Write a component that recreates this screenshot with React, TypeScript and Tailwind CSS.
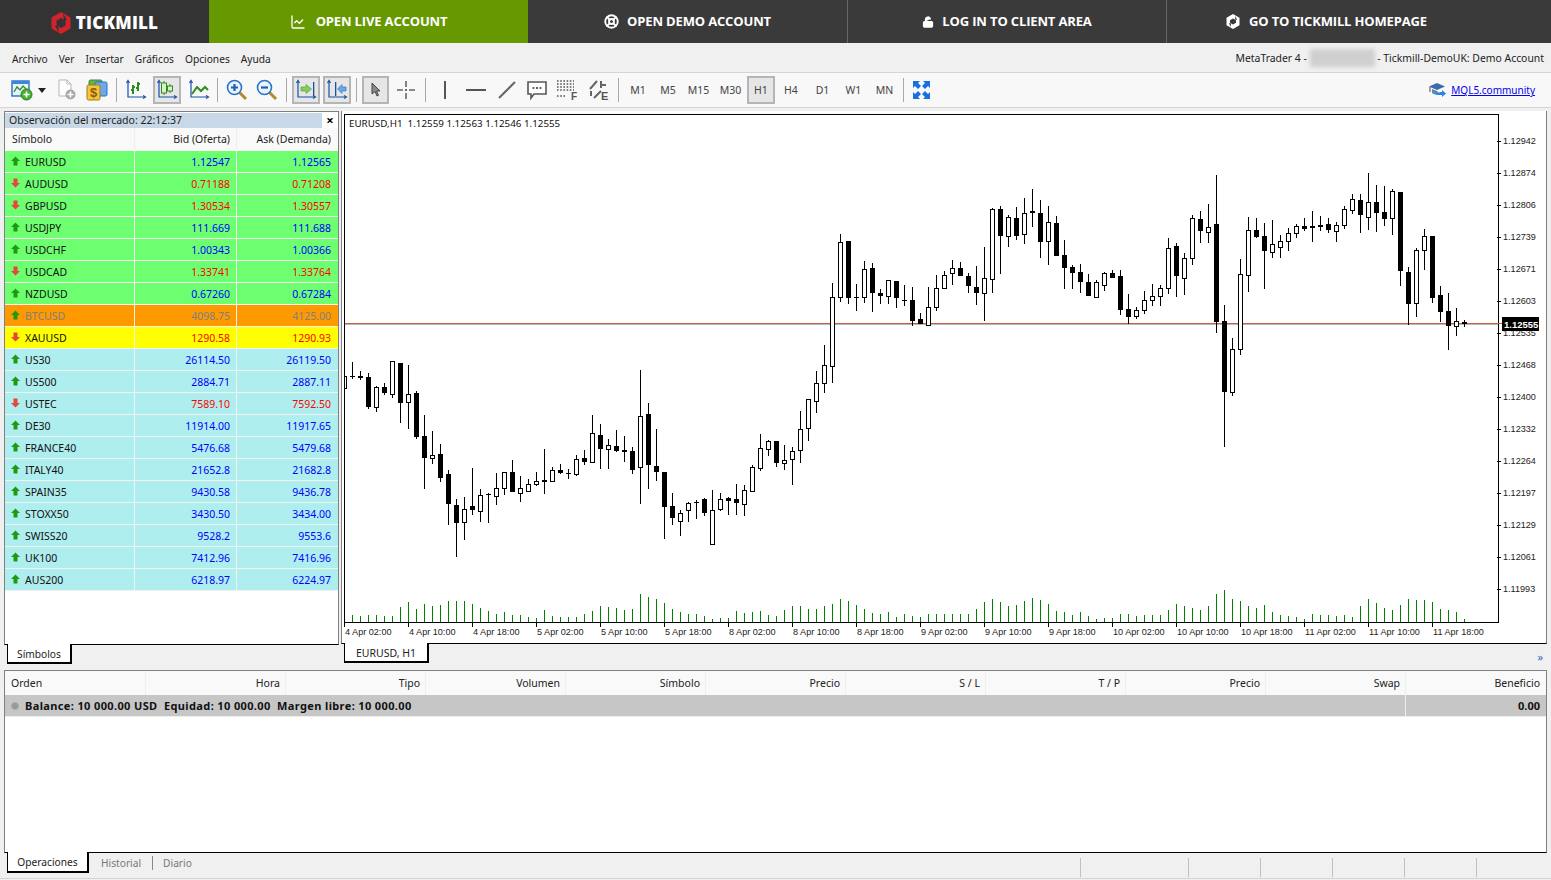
import React from "react";
import { LifeBuoy, LineChart, LockOpen } from "lucide-react";

type C = [number, number, number, number, number];
// [wickTop, bodyTop, bodyBottom, wickBottom, black] in 3x crop coordinates
const segA: C[] = [
  [78,78,115,115,0],[37,78,80,87,1],[63,78,84,90,1],[70,81,170,176,1],[108,112,170,186,0],[98,112,130,135,1],[33,33,131,143,0],[40,40,158,218,1],[45,133,157,236,0],[124,130,260,268,1],
  [195,259,323,417,1],[243,316,323,341,0],[282,313,383,396,1],[360,373,461,524,1],[447,466,518,620,1],[441,478,515,570,0],[354,468,480,495,1],[417,436,482,516,0],[428,431,436,519,1],[369,415,437,465,0],
  [366,367,413,435,0],[330,367,425,425,1],[378,415,430,456,0],[388,403,422,422,0],[366,394,401,408,0],[297,390,395,432,1],[351,361,392,392,0],[342,361,368,372,1],[357,369,371,387,1],[315,328,371,377,0],
  [300,325,335,344,1],[195,250,335,338,0],[222,256,296,357,1],[267,286,296,357,0],[240,289,302,305,1],[258,300,307,336,1],[292,304,359,372,1],[60,199,352,462,0],[159,193,344,417,1],[237,349,365,393,1],
  [366,367,470,567,1],[429,469,503,524,1],[480,490,512,558,0],[456,460,481,516,0],[450,455,460,507,1],[445,448,488,498,1],[420,479,583,584,0],[430,446,476,483,0],[440,445,452,495,1],[402,448,458,495,1],
];
const segB: C[] = [
  [975,991,1031,1068,0],[915,922,992,995,0],[822,865,923,933,0],[840,844,866,888,0],[844,844,908,920,1],[855,901,908,930,0],[862,874,896,975,0],[753,808,869,908,0],[718,718,803,843,0],[633,670,722,758,0],
  [555,616,668,698,0],[369,412,617,668,0],[222,247,412,426,0],[243,243,414,432,1],[372,411,413,453,1],[303,328,412,429,0],[309,324,398,456,1],[387,399,408,432,1],[360,361,407,432,0],[363,363,414,444,1],
  [375,421,423,438,1],[381,420,483,498,1],[459,477,492,492,1],[381,442,494,494,0],[345,385,440,453,0],[333,346,383,387,0],[300,325,338,375,0],[306,324,348,348,1],[339,348,378,399,1],[318,381,399,435,1],
  [261,355,398,483,0],[145,148,356,399,0],[138,147,228,342,1],[165,172,227,261,0],[141,174,228,240,1],[114,160,221,252,0],[87,153,159,201,1],[120,159,246,294,1],[138,187,242,315,0],[168,189,288,288,1],
  [240,285,324,387,1],[315,321,339,387,1],[312,336,366,399,1],[342,366,408,408,1],[360,367,410,411,0],[336,340,374,393,0],[330,339,354,354,1],[330,348,450,465,1],[402,447,471,492,1],[441,451,467,477,0],
  [393,421,449,462,0],[372,409,419,438,0],[375,385,409,438,0],[234,265,385,402,0],[249,258,348,411,1],[279,295,353,405,0],[165,175,293,315,0],[153,177,213,249,1],[132,202,215,249,0],[45,192,486,519,1],
  [435,483,696,861,1],[534,568,695,708,0],[297,343,566,585,0],[171,211,344,396,0],[174,210,231,234,1],[189,228,273,387,1],[180,253,275,294,0],[225,244,260,294,0],[204,220,242,273,0],[192,199,218,234,0],
  [174,199,207,213,1],[153,198,204,246,1],[168,195,201,213,1],[174,192,210,219,1],[186,196,212,246,0],[138,148,194,207,0],[102,118,149,162,0],[102,120,165,219,1],[39,127,170,210,0],[75,126,159,216,1],
  [78,156,177,198,1],[87,94,173,225,0],[96,96,333,378,1],[321,336,432,495,1],[264,270,428,471,0],[207,229,269,330,0],[228,228,414,429,1],[378,405,456,486,1],[399,453,498,570,1],[444,484,497,528,0],
  [480,487,491,502,1],
];
const volA = [795,798,795,796,798,798,771,755,776,763,768,765,753,754,754,763,774,784,791,786,794,796,801,803,780,799,800,801,800,792,782,768,771,774,780,777,732,742,747,759,777,786,792,792,798,807,805,804,784];
const volB = [160,157,154,165,167,150,138,137,146,148,137,131,116,124,135,148,158,163,157,171,162,168,172,161,161,162,163,163,161,147,127,116,126,137,134,124,115,120,131,153,155,164,156,167,176,174,175,162,163,167,165,165,165,150,132,139,144,150,137,101,90,118,123,138,145,135,156,165,168,171,176,162,165,165,168,166,170,138,118,130,144,150,134,117,119,120,127,148,149,156,178];

const prices = ["1.12942","1.12874","1.12806","1.12739","1.12671","1.12603","1.12535","1.12468","1.12400","1.12332","1.12264","1.12197","1.12129","1.12061","1.11993"];
const times = ["4 Apr 02:00","4 Apr 10:00","4 Apr 18:00","5 Apr 02:00","5 Apr 10:00","5 Apr 18:00","8 Apr 02:00","8 Apr 10:00","8 Apr 18:00","9 Apr 02:00","9 Apr 10:00","9 Apr 18:00","10 Apr 02:00","10 Apr 10:00","10 Apr 18:00","11 Apr 02:00","11 Apr 10:00","11 Apr 18:00"];

function Candle({ c, i, base }: { c: C; i: number; base: number }) {
  const x = 352 + 8 * i;
  const y = (v: number) => Math.round(base + v / 3);
  const [wt, bt, bb, wb, black] = c;
  const top = y(bt);
  const h = Math.max(y(bb) - top, 1);
  return (
    <g>
      <rect x={x} y={y(wt)} width={1} height={Math.max(y(wb) - y(wt), 1)} fill="#000" />
      <rect x={x - 2} y={top} width={5} height={h + (black ? 0 : 1)} fill="#000" />
      {!black && h >= 2 && <rect x={x - 1} y={top + 1} width={3} height={h - 1} fill="#fff" />}
    </g>
  );
}

function Chart() {
  return (
    <svg viewBox="342 111 1204 532" width={1204} height={532} shapeRendering="crispEdges" className="block">
      <defs>
        <clipPath id="plot"><rect x={345} y={115} width={1153} height={507} /></clipPath>
      </defs>
      <rect x={341} y={111} width={1206} height={532} fill="#fff" />
      <g clipPath="url(#plot)">
        {volA.map((v, k) => <rect key={k} x={352 + 8 * k} y={Math.round(350 + v / 3)} width={1} height={622 - Math.round(350 + v / 3)} fill="#008000" />)}
        {volB.map((v, k) => <rect key={k} x={352 + 8 * (k + 49)} y={Math.round(560 + v / 3)} width={1} height={622 - Math.round(560 + v / 3)} fill="#008000" />)}
        <rect x={345} y={323} width={1153} height={1} fill="#c9603f" />
        <rect x={345} y={324} width={1153} height={1} fill="#b8b8b8" />
        {segA.map((c, k) => <Candle key={k} c={c} i={k - 1} base={350} />)}
        {segB.map((c, k) => <Candle key={k} c={c} i={k + 49} base={160} />)}
      </g>
      <rect x={344} y={114} width={1155} height={1} fill="#000" />
      <rect x={344} y={114} width={1} height={509} fill="#000" />
      <rect x={1498} y={114} width={1} height={509} fill="#000" />
      <rect x={344} y={622} width={1155} height={1} fill="#000" />
      {times.map((t, k) => (
        <g key={t}>
          <rect x={344 + 64 * k} y={622} width={1} height={5} fill="#000" />
          <text x={345 + 64 * k} y={635} fontSize={9.1} fill="#222" fontFamily="'Liberation Sans', sans-serif" shapeRendering="auto">{t}</text>
        </g>
      ))}
      {prices.map((p, k) => (
        <g key={p}>
          <rect x={1497} y={141 + 32 * k} width={4} height={1} fill="#000" />
          <text x={1503} y={144 + 32 * k} fontSize={9.1} fill="#222" fontFamily="'Liberation Sans', sans-serif" shapeRendering="auto">{p}</text>
        </g>
      ))}
      <rect x={1498} y={323} width={4} height={1} fill="#c9603f" />
      <rect x={1502} y={317} width={37} height={14} fill="#000" />
      <text x={1504} y={328} fontSize={9.5} fontWeight={700} fill="#fff" fontFamily="'Liberation Sans', sans-serif" shapeRendering="auto">1.12555</text>
      <text x={349} y={127} fontSize={9.8} fill="#111" fontFamily="'Noto Sans', sans-serif" shapeRendering="auto" xmlSpace="preserve">EURUSD,H1  1.12559 1.12563 1.12546 1.12555</text>
    </svg>
  );
}

const A = ({ up }: { up: boolean }) => (
  <svg width="9" height="10" viewBox="0 0 9 10" className="shrink-0 -mt-[3px]">
    {up ? <path d="M4.5 0.5 L9 5 H6.5 V9.5 H2.5 V5 H0 Z" fill="#1d9a0f" /> : <path d="M4.5 9.5 L9 5 H6.5 V0.5 H2.5 V5 H0 Z" fill="#e8453c" />}
  </svg>
);

type Row = [string, string, string, boolean, string];
const rows: Row[] = [
  ["EURUSD","1.12547","1.12565",true,"g"],["AUDUSD","0.71188","0.71208",false,"g"],["GBPUSD","1.30534","1.30557",false,"g"],["USDJPY","111.669","111.688",true,"g"],["USDCHF","1.00343","1.00366",true,"g"],["USDCAD","1.33741","1.33764",false,"g"],["NZDUSD","0.67260","0.67284",true,"g"],
  ["BTCUSD","4098.75","4125.00",true,"o"],["XAUUSD","1290.58","1290.93",false,"y"],
  ["US30","26114.50","26119.50",true,"c"],["US500","2884.71","2887.11",true,"c"],["USTEC","7589.10","7592.50",false,"c"],["DE30","11914.00","11917.65",true,"c"],["FRANCE40","5476.68","5479.68",true,"c"],["ITALY40","21652.8","21682.8",true,"c"],["SPAIN35","9430.58","9436.78",true,"c"],["STOXX50","3430.50","3434.00",true,"c"],["SWISS20","9528.2","9553.6",true,"c"],["UK100","7412.96","7416.96",true,"c"],["AUS200","6218.97","6224.97",true,"c"],
];
const bgOf: Record<string, string> = { g: "bg-[#6dff70]", o: "bg-[#ff9900]", y: "bg-[#ffff00]", c: "bg-[#afeeee]" };

function WatchRow({ r }: { r: Row }) {
  const [s, b, a, up, k] = r;
  const priceCol = k === "o" ? "text-[#808080]" : up ? "text-[#0000ff]" : "text-[#ff0000]";
  const symCol = k === "o" ? "text-[#808080]" : "text-[#111]";
  return (
    <div className="flex h-[22px] shrink-0 border-b border-[#f2f2f2]">
      <div className={`${bgOf[k]} w-[130px] flex items-center gap-[5px] pl-[6px] pt-[2px] border-r border-[#f2f2f2] ${symCol}`}><A up={up} /><span>{s}</span></div>
      <div className={`${bgOf[k]} w-[102px] flex items-center justify-end pr-[6px] pt-[2px] border-r border-[#f2f2f2] ${priceCol}`}>{b}</div>
      <div className={`${bgOf[k]} w-[101px] flex items-center justify-end pr-[7px] pt-[2px] ${priceCol}`}>{a}</div>
    </div>
  );
}

const Sep = ({ w = "w-[9px]" }: { w?: string }) => (
  <div className={`${w} shrink-0 flex justify-center`}><div className="w-px h-[24px] bg-[#a9a9a9]" /></div>
);

function Btn({ w, active, children }: { w: string; active?: boolean; children?: React.ReactNode }) {
  return (
    <div className={`${w} h-[28px] shrink-0 flex items-center justify-center ${active ? "bg-[#e6e6e6] border-2 border-[#b5b5b5]" : ""}`}>{children}</div>
  );
}

const BL = "#1a4fa8";
const Axes = () => (
  <g fill="none" stroke={BL} strokeWidth="1.2">
    <path d="M3 2V18H20" />
    <path d="M1.5 4L3 1.5 4.5 4M18 16.5 20.5 18 18 19.5" />
  </g>
);
const I = ({ children, w = 22, h = 22 }: { children: React.ReactNode; w?: number; h?: number }) => (
  <svg width={w} height={h} viewBox={`0 0 ${w} ${h}`}>{children}</svg>
);

const IconNew = () => (
  <I w={22} h={22}>
    <rect x="1" y="2" width="17" height="15" fill="#e8f2fb" stroke="#2a6fc0" strokeWidth="1.4" />
    <rect x="1" y="2" width="17" height="3" fill="#3b86d8" />
    <path d="M3 13L6 8 9 11 12 7 16 11" fill="none" stroke="#3a8f2a" strokeWidth="1.4" />
    <circle cx="15.5" cy="15.5" r="5.5" fill="#45b034" stroke="#2d7f22" />
    <path d="M15.5 12.5v6M12.5 15.5h6" stroke="#fff" strokeWidth="1.6" />
  </I>
);
const IconDoc = () => (
  <I>
    <path d="M3 1H11L15 5V17H3Z" fill="#fff" stroke="#b5b5b5" />
    <path d="M11 1V5H15" fill="none" stroke="#b5b5b5" />
    <circle cx="14.5" cy="15.5" r="5" fill="#a8a8a8" />
    <path d="M14.5 12.5v6M11.5 15.5h6" stroke="#fff" strokeWidth="1.6" />
  </I>
);
const IconDollar = () => (
  <I>
    <rect x="3" y="1" width="13" height="9" rx="1.5" fill="#5fb24c" stroke="#3a8a2e" />
    <rect x="9" y="3" width="12" height="14" rx="1.5" fill="#6ea8e6" stroke="#2a6fc0" />
    <rect x="1" y="6" width="13" height="15" rx="1.5" fill="#f3c63d" stroke="#a87a12" />
    <text x="7.5" y="18" textAnchor="middle" fontSize="13" fontWeight="700" fill="#8a5a08" fontFamily="'Liberation Sans', sans-serif">$</text>
  </I>
);
const IconBars = () => (
  <I>
    <Axes />
    <path d="M8 6V15M8 11H6M8 8H10M13 3V12M13 9H11M13 5H15" stroke="#2e8b1e" strokeWidth="2" fill="none" />
  </I>
);
const IconCandles = () => (
  <I>
    <Axes />
    <path d="M8 2V16M14 5V14" stroke="#2e8b1e" />
    <rect x="5.5" y="4" width="5" height="10" fill="#d9f2c9" stroke="#2e8b1e" />
    <rect x="11.5" y="7" width="5" height="5" fill="#d9f2c9" stroke="#2e8b1e" />
  </I>
);
const IconLine = () => (
  <I>
    <Axes />
    <path d="M4 15L9 8 13 12 17 8 20 11" fill="none" stroke="#2e8b1e" strokeWidth="2" />
  </I>
);
const IconZoom = ({ plus }: { plus?: boolean }) => (
  <I>
    <path d="M13 13L20 20" stroke="#b58a2a" strokeWidth="3" />
    <circle cx="8.5" cy="8.5" r="7" fill="#e8f3fc" stroke="#2a74c8" strokeWidth="1.6" />
    <path d={plus ? "M5 8.5h7M8.5 5v7" : "M5 8.5h7"} stroke="#1f5fb0" strokeWidth="2.2" />
  </I>
);
const IconScroll = () => (
  <I>
    <Axes />
    <rect x="18" y="3" width="1.3" height="14" fill={BL} />
    <path d="M6 8H11V5.5L16.5 10 11 14.5V12H6Z" fill="#7fd05a" stroke="#4d9a2e" strokeWidth=".6" />
  </I>
);
const IconShift = () => (
  <I>
    <Axes />
    <rect x="9" y="3" width="1.3" height="14" fill={BL} />
    <path d="M20 8H16V5.5L11.5 10 16 14.5V12H20Z" fill="#6aa6ea" stroke="#2a6fc0" strokeWidth=".6" />
  </I>
);
const IconCursor = () => (
  <I>
    <path d="M7 4L7 15 10 12.5 12 17 13.5 16.3 11.5 12 15 12Z" fill="#8a8a8a" stroke="#444" />
  </I>
);
const IconCross = () => (
  <I>
    <path d="M11 2V8M11 14V20M2 11H8M14 11H20" stroke="#666" strokeWidth="1.6" />
    <rect x="10" y="10" width="2" height="2" fill="#666" />
  </I>
);
const IconV = () => <I><path d="M11 2V20" stroke="#555" strokeWidth="2" /></I>;
const IconH = () => <I><path d="M1 11H21" stroke="#555" strokeWidth="2" /></I>;
const IconT = () => <I><path d="M3 19L19 3" stroke="#666" strokeWidth="2" /></I>;
const IconMsg = () => (
  <I>
    <path d="M2 3H20V15H8L5 19V15H2Z" fill="#fff" stroke="#555" strokeWidth="1.6" />
    <path d="M6.5 9h2M10 9h2M13.5 9h2" stroke="#333" strokeWidth="1.6" />
  </I>
);
const IconFib = () => (
  <I>
    <path d="M1 2H18M1 5H18M1 8H18M1 11H18" stroke="#555" strokeWidth="1.6" strokeDasharray="1.6 1.6" />
    <path d="M1 17H9" stroke="#555" strokeWidth="1.6" strokeDasharray="1.6 1.6" />
    <text x="15" y="21" fontSize="10" fontWeight="700" fill="#555" fontFamily="'Liberation Sans', sans-serif">F</text>
  </I>
);
const IconE = () => (
  <I>
    <path d="M2 10L9 2M3 17L3 12M6 19L13 12M13 2V9M13 6H18" stroke="#666" strokeWidth="2" fill="none" />
    <text x="13" y="21" fontSize="11" fontWeight="700" fill="#555" fontFamily="'Liberation Sans', sans-serif">E</text>
  </I>
);
const IconFull = () => (
  <svg width="17" height="18" viewBox="0 0 17 18">
    <path d="M0 0H7L5 2 8 5 5 8 2 5 0 7ZM17 0H10L12 2 9 5 12 8 15 5 17 7ZM0 18H7L5 16 8 13 5 10 2 13 0 11ZM17 18H10L12 16 9 13 12 10 15 13 17 11Z" fill="#1a6fe0" />
  </svg>
);
const IconCap = () => (
  <svg width="17" height="16" viewBox="0 0 17 16">
    <path d="M8 1L16 4.5 8 8 0 4.5Z" fill="#3b6ea8" />
    <path d="M3 7V11C5 13 9 13 11 12L8 9Z" fill="#5a87b8" />
    <path d="M1 5V10" stroke="#444" />
    <path d="M7 13C9 10 11 10 13 10V8L17 11.5 13 15V13C11 13 9 13 7 13Z" fill="#2a86e0" />
  </svg>
);
const HexLogo = () => (
  <svg width="20" height="22" viewBox="0 0 20 22" className="shrink-0">
    <path d="M10 0L19.5 5.5V16.5L10 22 .5 16.5V5.5Z" fill="#d2232a" />
    <path d="M10 6L14.5 8.5V13.5L10 16 5.5 13.5V8.5Z" fill="#333" />
    <path d="M12 1.5L16 8 13 8.5ZM8 20.5L4 14 7 13.5Z" fill="#333" />
  </svg>
);
const HexW = () => (
  <svg width="14" height="15" viewBox="0 0 14 15" className="shrink-0">
    <path d="M7 0L13.5 3.7V11.3L7 15 .5 11.3V3.7Z" fill="#fff" />
    <path d="M7 4.5L10 6.2V8.8L7 10.5 4 8.8V6.2Z" fill="#3a3a3a" />
    <path d="M9.5 2L11 6 9 5.5ZM4.5 13L3 9 5 9.5Z" fill="#3a3a3a" />
  </svg>
);

const navText = "font-['Open_Sans',sans-serif] font-bold text-[13px] text-white tracking-[-0.15px]";

const timeframes: [string, string, boolean][] = [
  ["M1","w-[30px]",false],["M5","w-[30px]",false],["M15","w-[31px]",false],["M30","w-[33px]",false],["H1","w-[28px]",true],["H4","w-[32px]",false],["D1","w-[31px]",false],["W1","w-[31px]",false],["MN","w-[31px]",false],
];

const cols = ["Orden","Hora","Tipo","Volumen","Símbolo","Precio","S / L","T / P","Precio","Swap"];
const status = ["w-[108px]","w-[72px]","w-[72px]","w-[72px]","w-[72px]","w-[71px]"];

export default function App() {
  return (
    <div className="w-[1551px] h-[880px] overflow-hidden bg-[#f0f0f0] flex flex-col text-[10.5px] text-[#222] font-['Noto_Sans',sans-serif] leading-none">
      <header className="h-[43px] shrink-0 flex bg-[#3a3a3a]">
        <div className="w-[209px] flex items-center justify-center gap-[5px] bg-[#333333] pt-[2px]">
          <HexLogo />
          <span className="font-['Open_Sans',sans-serif] font-extrabold text-[17px] text-white tracking-[0.2px]">TICKMILL</span>
        </div>
        <div className="w-[319px] flex items-center justify-center gap-[10px] bg-[#669900]">
          <LineChart size={16} color="#fff" strokeWidth={2} />
          <span className={navText}>OPEN LIVE ACCOUNT</span>
        </div>
        <div className="w-[320px] flex items-center justify-center gap-[8px] border-r border-[#666]">
          <LifeBuoy size={15} color="#fff" strokeWidth={3} />
          <span className={navText}>OPEN DEMO ACCOUNT</span>
        </div>
        <div className="w-[319px] flex items-center justify-center gap-[8px] border-r border-[#666]">
          <LockOpen size={12} color="#fff" fill="#fff" strokeWidth={2.5} />
          <span className={navText}>LOG IN TO CLIENT AREA</span>
        </div>
        <div className="w-[384px] flex items-center justify-start gap-[9px] pl-[59px]">
          <HexW />
          <span className={navText}>GO TO TICKMILL HOMEPAGE</span>
        </div>
      </header>

      <div className="h-[30px] shrink-0 flex items-center pl-[12px] pr-[7px] pt-[3px] border-b border-[#d5d5d5]">
        <div className="flex gap-[11px] text-[10.2px]">
          {["Archivo","Ver","Insertar","Gráficos","Opciones","Ayuda"].map((m) => <span key={m}>{m}</span>)}
        </div>
        <div className="ml-auto flex items-center text-[10.4px] -mt-[2px]">
          <span>MetaTrader 4 -&nbsp;</span>
          <div className="w-[65px] h-[18px] bg-[#cfcfcf] blur-[2px]" />
          <span>&nbsp;- Tickmill-DemoUK: Demo Account</span>
        </div>
      </div>

      <div className="h-[35px] shrink-0 flex items-center pl-[8px] pr-[16px] bg-[#f8f8f8] border-b border-[#d5d5d5]">
        <Btn w="w-[28px]"><IconNew /></Btn>
        <Btn w="w-[12px]"><svg width="8" height="5" viewBox="0 0 8 5"><path d="M0 0H8L4 5Z" fill="#222" /></svg></Btn>
        <div className="w-[4px] shrink-0" />
        <Btn w="w-[30px]"><IconDoc /></Btn>
        <Btn w="w-[30px]"><IconDollar /></Btn>
        <Sep />
        <Btn w="w-[30px]"><IconBars /></Btn>
        <div className="w-[2px] shrink-0" />
        <Btn w="w-[28px]" active><IconCandles /></Btn>
        <div className="w-[3px] shrink-0" />
        <Btn w="w-[29px]"><IconLine /></Btn>
        <Sep />
        <Btn w="w-[30px]"><IconZoom plus /></Btn>
        <Btn w="w-[30px]"><IconZoom /></Btn>
        <Sep />
        <div className="w-px shrink-0" />
        <Btn w="w-[28px]" active><IconScroll /></Btn>
        <div className="w-[3px] shrink-0" />
        <Btn w="w-[28px]" active><IconShift /></Btn>
        <Sep w="w-[10px]" />
        <div className="w-px shrink-0" />
        <Btn w="w-[27px]" active><IconCursor /></Btn>
        <div className="w-[2px] shrink-0" />
        <Btn w="w-[30px]"><IconCross /></Btn>
        <Sep />
        <Btn w="w-[30px]"><IconV /></Btn>
        <div className="w-px shrink-0" />
        <Btn w="w-[30px]"><IconH /></Btn>
        <div className="w-px shrink-0" />
        <Btn w="w-[30px]"><IconT /></Btn>
        <Btn w="w-[30px]"><IconMsg /></Btn>
        <Btn w="w-[30px]"><IconFib /></Btn>
        <div className="w-[2px] shrink-0" />
        <Btn w="w-[30px]"><IconE /></Btn>
        <Sep />
        {timeframes.map(([t, w, a]) => <Btn key={t} w={w} active={a}><span className="text-[#444]">{t}</span></Btn>)}
        <Sep w="w-[6px]" />
        <Btn w="w-[30px]"><IconFull /></Btn>
        <div className="ml-auto flex items-center gap-[5px]">
          <IconCap />
          <span className="text-[10px] text-[#0000ee] underline">MQL5.community</span>
        </div>
      </div>

      <main className="h-[562px] shrink-0 flex pl-[4px] pt-[3px]">
        <div className="w-[335px] shrink-0 flex flex-col mr-[2px]">
          <div className="h-[534px] shrink-0 border border-[#808080] border-b-black bg-white flex flex-col">
            <div className="h-[16px] shrink-0 flex items-center bg-white">
              <div className="w-[317px] h-[15px] mt-[1px] bg-[#c9d8e6] flex items-center pl-[4px]">Observación del mercado: 22:12:37</div>
              <span className="flex-1 text-center font-bold text-[13px] text-black">×</span>
            </div>
            <div className="h-[23px] shrink-0 flex bg-[#f9f9f9]">
              <div className="w-[130px] flex items-center pl-[7px] border-r border-[#eeeeee]">Símbolo</div>
              <div className="w-[102px] flex items-center justify-end pr-[6px] border-r border-[#eeeeee]">Bid (Oferta)</div>
              <div className="w-[101px] flex items-center justify-end pr-[7px]">Ask (Demanda)</div>
            </div>
            {rows.map((r) => <WatchRow key={r[0]} r={r} />)}
          </div>
          <div className="ml-[3px] -mt-px w-[65px] h-[20px] shrink-0 flex items-center justify-center pt-[2px] bg-white border-l border-r-2 border-b-2 border-black text-[10.2px]">Símbolos</div>
        </div>
        <div className="w-[1206px] shrink-0 flex flex-col">
          <div className="h-[533px] shrink-0 border-l border-r border-[#808080] border-b border-b-black overflow-hidden">
            <Chart />
          </div>
          <div className="flex">
            <div className="ml-[3px] -mt-px w-[85px] h-[20px] shrink-0 flex items-center justify-center pt-[2px] bg-white border-l border-r-2 border-b-2 border-black">EURUSD, H1</div>
            <span className="ml-auto mr-[4px] mt-[7px] text-[#2a6fc0] text-[11px]">»</span>
          </div>
        </div>
      </main>

      <section className="h-[183px] shrink-0 mx-[4px] border border-[#808080] border-b-black bg-white flex flex-col">
        <div className="h-[24px] shrink-0 flex bg-[#f9f9f9]">
          {cols.map((c, k) => (
            <div key={k} className={`${k === 0 ? "w-[141px] pl-[6px]" : "w-[140px] justify-end pr-[5px]"} flex items-center border-r border-[#eeeeee]`}>{c}</div>
          ))}
          <div className="flex-1 flex items-center justify-end pr-[6px]">Beneficio</div>
        </div>
        <div className="h-[22px] shrink-0 flex bg-[#c6c6c6] border-b border-[#eeeeee] font-bold text-[11px] text-[#111]">
          <div className="w-[1401px] flex items-center pl-[6px] gap-[6px] border-r border-[#eeeeee]">
            <span className="w-[8px] h-[8px] rounded-full bg-[#999] border border-[#aaa]" />
            <span className="whitespace-pre tracking-[0.37px]">Balance: 10 000.00 USD  Equidad: 10 000.00  Margen libre: 10 000.00</span>
          </div>
          <div className="flex-1 flex items-center justify-end pr-[6px]">0.00</div>
        </div>
      </section>

      <footer className="flex-1 flex items-start pl-[7px] mb-[1px] border-b border-[#d5d5d5] text-[10.2px]">
        <div className="-mt-px w-[82px] h-[21px] shrink-0 flex items-center justify-center pt-[2px] bg-white border-l border-r-2 border-b-2 border-black">Operaciones</div>
        <span className="ml-[12px] mt-[3px] pr-[11px] h-[14px] border-r border-[#888] text-[#777] flex items-center">Historial</span>
        <span className="ml-[10px] mt-[3px] h-[14px] text-[#777] flex items-center">Diario</span>
        <div className="ml-auto flex mt-[5px] mr-[4px]">
          {status.map((w, k) => <div key={k} className={`${w} h-[19px] border-l border-[#c0c0c0]`} />)}
        </div>
      </footer>
    </div>
  );
}
